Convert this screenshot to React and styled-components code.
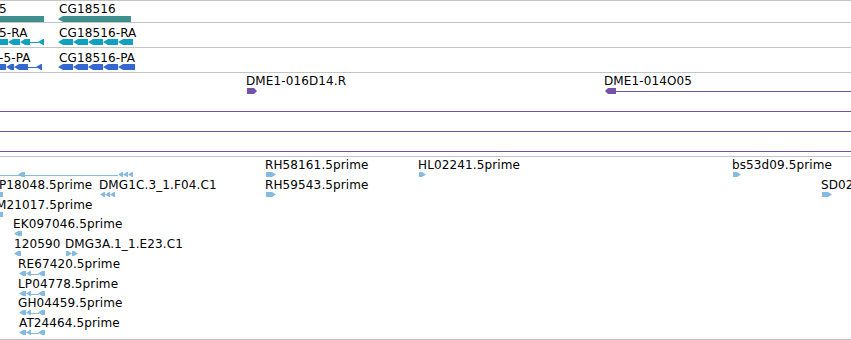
import React from 'react';
import styled, { createGlobalStyle } from 'styled-components';

const GlobalStyle = createGlobalStyle`
  html, body { margin: 0; padding: 0; background: #ffffff; }
  body {
    font-family: "DejaVu Sans", "Liberation Sans", sans-serif;
    overflow: hidden;
  }
`;

const COLORS = {
  gene: '#3f8f8f',
  ra: '#12a0c0',
  pa: '#3568cf',
  clone: '#7253a8',
  est: '#86bbe0',
};

const Browser = styled.div`
  width: 851px;
  height: 340px;
  overflow: hidden;
  background: #fff;
  display: flex;
  flex-direction: column;
`;

const Track = styled.section`
  position: relative;
  flex: none;
  height: ${(p) => p.$h}px;
  overflow: hidden;
  border-bottom: 1px solid #c4c4c4;
  ${(p) => (p.$first ? 'border-top: 1px solid #c4c4c4;' : '')}
`;

const Feature = styled.div`
  position: absolute;
  display: flex;
  flex-direction: column;
  align-items: flex-start;
`;

const Label = styled.span`
  display: block;
  height: 14px;
  font-size: 12px;
  line-height: 14px;
  letter-spacing: 0.12px;
  color: #000;
  white-space: nowrap;
`;

const GlyphSvg = styled.svg`
  display: block;
  overflow: visible;
  fill: ${(p) => p.$color};
`;

function Shape({ p, h, tipMax }) {
  const tip = Math.min(tipMax, p.w);
  const mid = h / 2;
  if (p.t === 'box') return <rect x={p.x} y={0} width={p.w} height={h} />;
  if (p.t === 'line')
    return <rect x={p.x} y={Math.round(h / 2)} width={p.w} height={1} />;
  if (p.t === 'l')
    return (
      <polygon
        points={`${p.x},${mid} ${p.x + tip},0 ${p.x + p.w},0 ${p.x + p.w},${h} ${p.x + tip},${h}`}
      />
    );
  return (
    <polygon
      points={`${p.x},0 ${p.x + p.w - tip},0 ${p.x + p.w},${mid} ${p.x + p.w - tip},${h} ${p.x},${h}`}
    />
  );
}

function FeatureView({ f, top, color, h, tip, gap }) {
  const gMin = Math.min(...f.parts.map((p) => p.x));
  const gMax = Math.max(...f.parts.map((p) => p.x + p.w));
  const lx = f.label ? f.label.x : gMin;
  const minX = Math.min(lx, gMin);
  return (
    <Feature style={{ left: minX, top }}>
      <Label style={{ marginLeft: lx - minX }}>{f.label ? f.label.text : ''}</Label>
      <GlyphSvg
        $color={color}
        width={gMax - gMin}
        height={h}
        viewBox={`${gMin} 0 ${gMax - gMin} ${h}`}
        style={{ marginLeft: gMin - minX, marginTop: gap }}
      >
        {f.parts.map((p, i) => (
          <Shape key={i} p={p} h={h} tipMax={tip} />
        ))}
      </GlyphSvg>
    </Feature>
  );
}

const segs = (start, widths) => {
  let x = start;
  return widths.map((w) => {
    const s = { t: 'l', x, w };
    x += w;
    return s;
  });
};

const tracks = [
  {
    h: 21,
    color: COLORS.gene,
    glyphH: 6,
    tip: 5,
    gap: 0,
    rows: [
      {
        top: 1,
        features: [
          { label: { x: -1, text: '5' }, parts: [{ t: 'box', x: -6, w: 50 }] },
          { label: { x: 59, text: 'CG18516' }, parts: [{ t: 'l', x: 58, w: 73 }] },
        ],
      },
    ],
  },
  {
    h: 24,
    color: COLORS.ra,
    glyphH: 6,
    tip: 5,
    gap: -1,
    rows: [
      {
        top: 3,
        features: [
          {
            label: { x: -1, text: '5-RA' },
            parts: [
              ...segs(-6, [14, 12, 10]),
              { t: 'line', x: 30, w: 9 },
              { t: 'l', x: 38, w: 6 },
            ],
          },
          { label: { x: 59, text: 'CG18516-RA' }, parts: segs(58, [15, 15, 15, 15, 15]) },
        ],
      },
    ],
  },
  {
    h: 24,
    color: COLORS.pa,
    glyphH: 6,
    tip: 5,
    gap: -1,
    rows: [
      {
        top: 3,
        features: [
          {
            label: { x: -1, text: '-5-PA' },
            parts: [
              ...segs(-6, [12, 8, 14]),
              { t: 'line', x: 28, w: 9 },
              { t: 'l', x: 36, w: 6 },
            ],
          },
          { label: { x: 59, text: 'CG18516-PA' }, parts: segs(58, [15, 15, 15, 15, 17]) },
        ],
      },
    ],
  },
  {
    h: 83,
    color: COLORS.clone,
    glyphH: 6,
    tip: 3,
    gap: 0,
    rows: [
      {
        top: 1,
        features: [
          { label: { x: 246, text: 'DME1-016D14.R' }, parts: [{ t: 'r', x: 247, w: 10 }] },
          {
            label: { x: 604, text: 'DME1-014O05' },
            parts: [
              { t: 'l', x: 605, w: 11 },
              { t: 'line', x: 616, w: 245 },
            ],
          },
        ],
      },
      { top: 21, features: [{ parts: [{ t: 'line', x: -10, w: 875 }] }] },
      { top: 41, features: [{ parts: [{ t: 'line', x: -10, w: 875 }] }] },
      { top: 61, features: [{ parts: [{ t: 'line', x: -10, w: 875 }] }] },
    ],
  },
];

const estPitch = 19.75;
const estArrow = (x) => [
  { t: 'l', x, w: 7 },
  { t: 'l', x: x + 7, w: 5 },
  { t: 'line', x: x + 12, w: 8 },
  { t: 'l', x: x + 19, w: 7 },
];

const estRows = [
  [
    {
      parts: [
        { t: 'line', x: -10, w: 128 },
        { t: 'l', x: 18, w: 7 },
        { t: 'l', x: 118, w: 5 },
        { t: 'l', x: 123, w: 5 },
        { t: 'l', x: 128, w: 5 },
      ],
    },
    { label: { x: 265, text: 'RH58161.5prime' }, parts: [{ t: 'r', x: 266, w: 10 }] },
    { label: { x: 418, text: 'HL02241.5prime' }, parts: [{ t: 'r', x: 419, w: 7 }] },
    { label: { x: 732, text: 'bs53d09.5prime' }, parts: [{ t: 'r', x: 733, w: 8 }] },
  ],
  [
    { label: { x: -1, text: 'P18048.5prime' }, parts: [{ t: 'box', x: -6, w: 9 }] },
    {
      label: { x: 99, text: 'DMG1C.3_1.F04.C1' },
      parts: [
        { t: 'l', x: 100, w: 5 },
        { t: 'l', x: 105, w: 5 },
        { t: 'l', x: 110, w: 5 },
      ],
    },
    { label: { x: 265, text: 'RH59543.5prime' }, parts: [{ t: 'r', x: 266, w: 10 }] },
    { label: { x: 821, text: 'SD02' }, parts: [{ t: 'r', x: 822, w: 10 }] },
  ],
  [{ label: { x: -4, text: 'M21017.5prime' }, parts: [{ t: 'box', x: -6, w: 9 }] }],
  [{ label: { x: 13, text: 'EK097046.5prime' }, parts: [{ t: 'l', x: 14, w: 8 }] }],
  [
    { label: { x: 14, text: '120590' }, parts: [{ t: 'l', x: 14, w: 7 }] },
    {
      label: { x: 65, text: 'DMG3A.1_1.E23.C1' },
      parts: [
        { t: 'r', x: 66, w: 6 },
        { t: 'r', x: 72, w: 6 },
      ],
    },
  ],
  [{ label: { x: 18, text: 'RE67420.5prime' }, parts: estArrow(19) }],
  [{ label: { x: 18, text: 'LP04778.5prime' }, parts: estArrow(19) }],
  [{ label: { x: 18, text: 'GH04459.5prime' }, parts: estArrow(19) }],
  [{ label: { x: 19, text: 'AT24464.5prime' }, parts: estArrow(19) }],
];

tracks.push({
  h: 182,
  color: COLORS.est,
  glyphH: 5,
  tip: 4,
  gap: 0,
  rows: estRows.map((features, i) => ({ top: 1 + i * estPitch, features })),
});

export default function App() {
  return (
    <>
      <GlobalStyle />
      <Browser>
        {tracks.map((t, ti) => (
          <Track key={ti} $h={t.h} $first={ti === 0}>
            {t.rows.map((r, ri) =>
              r.features.map((f, fi) => (
                <FeatureView
                  key={`${ri}-${fi}`}
                  f={f}
                  top={r.top}
                  color={t.color}
                  h={t.glyphH}
                  tip={t.tip}
                  gap={t.gap}
                />
              ))
            )}
          </Track>
        ))}
      </Browser>
    </>
  );
}
